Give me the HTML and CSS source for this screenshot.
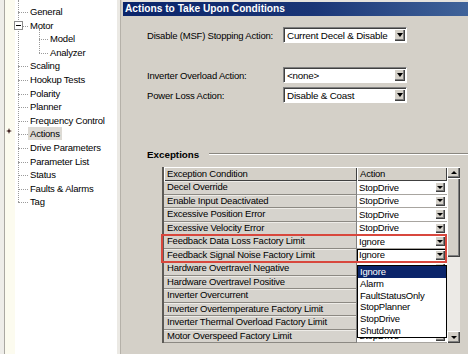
FILE: index.html
```html
<html lang="en">
<head>
    <meta charset="UTF-8">
    <title>Actions</title>
    <link rel="stylesheet" href="styles.css">
</head>
<body>
    <div class="window">
        <div class="tree">
            <ul class="nodes">
                <li><span class="label">General</span></li>
                <li>
                    <span class="label"><span class="toggle"></span>Motor</span>
                    <ul class="sub">
                        <li><span class="label">Model</span></li>
                        <li><span class="label">Analyzer</span></li>
                    </ul>
                </li>
                <li><span class="label">Scaling</span></li>
                <li><span class="label">Hookup Tests</span></li>
                <li><span class="label">Polarity</span></li>
                <li><span class="label">Planner</span></li>
                <li><span class="label">Frequency Control</span></li>
                <li>
                    <span class="label">
                        <svg class="star" width="6" height="6" viewBox="0 0 6 6"><path d="M3 0 L3.8 2.2 L6 3 L3.8 3.8 L3 6 L2.2 3.8 L0 3 L2.2 2.2 Z" fill="#3a1a1a"/></svg>
                        <span class="hl">Actions</span>
                    </span>
                </li>
                <li><span class="label">Drive Parameters</span></li>
                <li><span class="label">Parameter List</span></li>
                <li><span class="label">Status</span></li>
                <li><span class="label">Faults &amp; Alarms</span></li>
                <li><span class="label">Tag</span></li>
            </ul>
        </div>
        <div class="splitter"></div>
        <div class="panel">
            <div class="title">Actions to Take Upon Conditions</div>

            <div class="field first">
                <label>Disable (MSF) Stopping Action:</label>
                <div class="combo"><span class="value">Current Decel &amp; Disable</span><span class="btn"></span></div>
            </div>
            <div class="field gap">
                <label>Inverter Overload Action:</label>
                <div class="combo"><span class="value">&lt;none&gt;</span><span class="btn"></span></div>
            </div>
            <div class="field near">
                <label>Power Loss Action:</label>
                <div class="combo"><span class="value">Disable &amp; Coast</span><span class="btn"></span></div>
            </div>

            <div class="section"><span>Exceptions</span><span class="rule"></span></div>

            <div class="grid">
                <div class="table">
                    <div class="row head"><div class="cond">Exception Condition</div><div class="act">Action</div></div>
                    <div class="row"><div class="cond">Decel Override</div><div class="act"><span class="value">StopDrive</span><span class="btn small"></span></div></div>
                    <div class="row"><div class="cond">Enable Input Deactivated</div><div class="act"><span class="value">StopDrive</span><span class="btn small"></span></div></div>
                    <div class="row"><div class="cond">Excessive Position Error</div><div class="act"><span class="value">StopDrive</span><span class="btn small"></span></div></div>
                    <div class="row"><div class="cond">Excessive Velocity Error</div><div class="act"><span class="value">StopDrive</span><span class="btn small"></span></div></div>
                    <div class="row"><div class="cond">Feedback Data Loss Factory Limit</div><div class="act"><span class="value">Ignore</span><span class="btn small"></span></div></div>
                    <div class="row"><div class="cond">Feedback Signal Noise Factory Limit</div><div class="act focus"><span class="value">Ignore</span><span class="btn small"></span></div></div>
                    <!-- action cells below are hidden under the open list -->
                    <div class="row"><div class="cond">Hardware Overtravel Negative</div><div class="act"><span class="value"></span><span class="btn small"></span></div></div>
                    <div class="row"><div class="cond">Hardware Overtravel Positive</div><div class="act"><span class="value"></span><span class="btn small"></span></div></div>
                    <div class="row"><div class="cond">Inverter Overcurrent</div><div class="act"><span class="value"></span><span class="btn small"></span></div></div>
                    <div class="row"><div class="cond">Inverter Overtemperature Factory Limit</div><div class="act"><span class="value"></span><span class="btn small"></span></div></div>
                    <div class="row"><div class="cond">Inverter Thermal Overload Factory Limit</div><div class="act"><span class="value"></span><span class="btn small"></span></div></div>
                    <div class="row"><div class="cond">Motor Overspeed Factory Limit</div><div class="act"><span class="value">StopDrive</span><span class="btn small"></span></div></div>
                </div>
                <div class="scroll">
                    <div class="sbtn up"></div>
                    <div class="thumb"></div>
                    <div class="track"></div>
                    <div class="sbtn down"></div>
                </div>

                <div class="mark-box"></div>
                <div class="list">
                    <div class="sel">Ignore</div>
                    <div>Alarm</div>
                    <div>FaultStatusOnly</div>
                    <div>StopPlanner</div>
                    <div>StopDrive</div>
                    <div>Shutdown</div>
                </div>
            </div>
        </div>
    </div>
</body>
</html>
```

FILE: styles.css
```css
body {
    margin: 0;
    width: 468px;
    height: 354px;
    overflow: hidden;
    font-family: "Liberation Sans", Arial, sans-serif;
    font-size: 9.5px;
    letter-spacing: -0.2px;
    color: #000;
}
.window {
    display: flex;
    height: 354px;
}

/* tree */
.tree {
    width: 117px;
    flex: none;
    background: linear-gradient(to right, #eeede9 0 4px, #aaa8a2 4px 5px, #fcfbef 5px 15px, #fff 15px);
}
.tree ul {
    list-style: none;
    margin: 0;
    padding: 0;
}
.nodes {
    position: relative;
    padding-top: 5px !important;
}
.nodes::before {
    content: '';
    position: absolute;
    left: 18px;
    top: 0;
    height: 202px;
    border-left: 1px dotted #9a9a9a;
}
.tree .label {
    display: block;
    position: relative;
    height: 13.6px;
    line-height: 13.6px;
    padding-left: 30px;
    white-space: nowrap;
}
.tree .label::before {
    content: '';
    position: absolute;
    left: 18px;
    top: 7px;
    width: 10px;
    border-top: 1px dotted #9a9a9a;
}
.sub {
    position: relative;
}
.sub::before {
    content: '';
    position: absolute;
    left: 39px;
    top: -3px;
    height: 24px;
    border-left: 1px dotted #9a9a9a;
}
.sub .label {
    padding-left: 50px;
}
.sub .label::before {
    left: 39px;
    width: 9px;
}
.toggle {
    position: absolute;
    left: 14px;
    top: 2px;
    width: 9px;
    height: 9px;
    box-sizing: border-box;
    border: 1px solid #8a8a8a;
    background: #fff;
    z-index: 1;
}
.toggle::after {
    content: '';
    position: absolute;
    left: 1px;
    top: 3px;
    width: 5px;
    height: 1px;
    background: #000;
}
.star {
    position: absolute;
    left: 6px;
    top: 1px;
}
.hl {
    background: #dddad4;
    padding: 1px 2px;
    margin-left: -2px;
}

.splitter {
    width: 5px;
    flex: none;
    background: linear-gradient(to right, #ebe9e4 0 3px, #b5b1a9 3px 4px, #d4d0c8 4px);
}

/* panel */
.panel {
    flex: 1;
    background: #d4d0c8;
    border-top: 2px solid #e6e3de;
}
.title {
    height: 14px;
    line-height: 14px;
    margin-left: 1px;
    padding-left: 2px;
    color: #fff;
    font-weight: bold;
    font-size: 10.2px;
    letter-spacing: 0;
    background: linear-gradient(to right, #0a246a, #1a3576 55%, #40639a);
}
.field {
    display: flex;
    align-items: center;
    height: 16px;
    padding-left: 25px;
}
.field label {
    width: 136px;
}
.field.first {
    margin-top: 11px;
}
.field.gap {
    margin-top: 24px;
}
.field.near {
    margin-top: 4px;
}
.combo {
    width: 124px;
    height: 16px;
    box-sizing: border-box;
    display: flex;
    align-items: center;
    padding-left: 3px;
    background: #fff;
    border: 1px solid;
    border-color: #808080 #fff #fff #808080;
    box-shadow: inset 1px 1px 0 #404040;
    font-size: 9.8px;
}
.value {
    flex: 1;
    white-space: nowrap;
}
.btn {
    width: 11px;
    height: 12px;
    margin-right: 1px;
    display: flex;
    align-items: center;
    justify-content: center;
    background: #d4d0c8;
    box-shadow: inset 1px 1px 0 #fff, inset -1px -1px 0 #404040, inset -2px -2px 0 #808080;
}
.btn::after {
    content: '';
    border-left: 3.5px solid transparent;
    border-right: 3.5px solid transparent;
    border-top: 4px solid #000;
}
.btn.small {
    width: 10px;
    height: 10px;
    margin-right: 2px;
}
.btn.small::after {
    border-left-width: 3px;
    border-right-width: 3px;
    border-top-width: 3px;
}

.section {
    display: flex;
    align-items: center;
    height: 12px;
    margin-top: 45px;
    padding-left: 25px;
    font-weight: bold;
    font-size: 9.8px;
    letter-spacing: 0;
}
.rule {
    flex: 1;
    margin-left: 10px;
    border-top: 1px solid #8a8780;
    border-bottom: 1px solid #fff;
}

/* exceptions grid */
.grid {
    position: relative;
    display: flex;
    margin: 7px 0 0 40px;
}
.table {
    width: 285px;
    box-sizing: border-box;
    border-left: 2px solid #5c5a56;
}
.row {
    display: flex;
    height: 13.5px;
}
.row.head {
    height: 14px;
}
.cond {
    width: 193px;
    box-sizing: border-box;
    padding-left: 3px;
    line-height: 12.5px;
    white-space: nowrap;
    background: #d6d3cd;
    border-right: 1px solid #808080;
    border-bottom: 1px solid #8c8983;
    box-shadow: inset 0 1px 0 #eeece8;
}
.act {
    width: 90px;
    box-sizing: border-box;
    display: flex;
    align-items: center;
    padding-left: 2px;
    background: #fff;
    border-bottom: 1px solid #a8a5a0;
}
.act.focus {
    outline: 1px solid #000;
    outline-offset: -1px;
}
.head .cond,
.head .act {
    background: #d4d0c8;
    border: none;
    line-height: 14px;
    box-shadow: inset 1px 1px 0 #fff, inset -1px -1px 0 #404040;
}
.head .act {
    padding-left: 3px;
}

.scroll {
    width: 13px;
    display: flex;
    flex-direction: column;
}
.sbtn,
.thumb {
    background: #d4d0c8;
    box-shadow: inset 1px 1px 0 #fff, inset -1px -1px 0 #404040, inset -2px -2px 0 #808080;
}
.sbtn {
    height: 11px;
    display: flex;
    align-items: center;
    justify-content: center;
}
.sbtn.down {
    height: 12px;
}
.sbtn::after {
    content: '';
    border-left: 3px solid transparent;
    border-right: 3px solid transparent;
}
.sbtn.up::after {
    border-bottom: 3px solid #000;
}
.sbtn.down::after {
    border-top: 3px solid #000;
}
.thumb {
    height: 79px;
}
.track {
    flex: 1;
    background: #eceae6;
}

.mark-box {
    position: absolute;
    left: -1px;
    top: 67px;
    width: 286px;
    height: 29px;
    box-sizing: border-box;
    border: 2px solid #d8473d;
}
.list {
    position: absolute;
    left: 195px;
    top: 98px;
    width: 90px;
    height: 73px;
    box-sizing: border-box;
    border: 1px solid #000;
    background: #fff;
}
.list div {
    height: 11.8px;
    line-height: 11.8px;
    padding-left: 2px;
    white-space: nowrap;
}
.list .sel {
    background: #0a246a;
    color: #fff;
}
```
